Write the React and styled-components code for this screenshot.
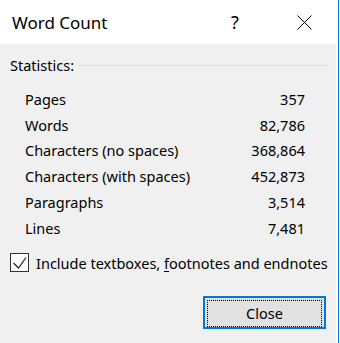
import React from 'react';
import styled, { createGlobalStyle } from 'styled-components';

const GlobalStyle = createGlobalStyle`
  html, body {
    margin: 0;
    padding: 0;
    background: #ffffff;
  }
  body {
    font-family: 'Noto Sans', 'Open Sans', sans-serif;
    color: #000000;
  }
`;

const StyledWindow = styled.div`
  width: 339px;
  height: 343px;
  display: flex;
  flex-direction: column;
  border-right: 1px solid #0078d7;
  background: #ffffff;
  box-sizing: border-box;
`;

const StyledTitleBar = styled.div`
  height: 44px;
  display: flex;
  align-items: center;
  padding-left: 12px;
  font-size: 17px;

  .title {
    flex: 1;
  }

  .help {
    width: 20px;
    margin-right: 52px;
    font-size: 18px;
    text-align: center;
  }

  .close {
    width: 15px;
    height: 15px;
    margin-right: 26px;
  }
`;

const StyledBody = styled.div`
  flex: 1;
  margin-right: 2px;
  background: #f0f0f0;
  padding: 13px 8px 0 10px;
  font-size: 14.5px;
`;

const StyledGroupHeader = styled.div`
  display: flex;
  align-items: center;
  gap: 4px;
  height: 16px;

  &:after {
    content: '';
    flex: 1;
    height: 1px;
    background: #dcdcdc;
  }
`;

const StyledStats = styled.div`
  display: grid;
  grid-template-columns: 1fr auto;
  grid-auto-rows: 25.8px;
  align-items: center;
  margin: 13px 23px 0 15px;

  .value {
    justify-self: end;
  }
`;

const StyledCheckRow = styled.label`
  display: flex;
  align-items: center;
  gap: 7px;
  height: 20px;
  margin-top: 12px;

  .box {
    width: 19px;
    height: 19px;
    box-sizing: border-box;
    border: 1px solid #333333;
    background: #ffffff;
    display: flex;
    align-items: center;
    justify-content: center;
  }

  u {
    text-underline-offset: 2px;
  }
`;

const StyledFooter = styled.div`
  display: flex;
  justify-content: flex-end;
  margin-top: 23px;
  padding-right: 2px;
`;

const StyledButton = styled.button`
  width: 123px;
  height: 33px;
  border: 2px solid #0078d7;
  background: #e1e1e1;
  padding: 2px;
  font: inherit;
  font-size: 14.5px;
  color: #000000;

  span {
    display: flex;
    align-items: center;
    justify-content: center;
    height: 100%;
    border: 1px dotted #000000;
  }
`;

const stats = [
  ['Pages', '357'],
  ['Words', '82,786'],
  ['Characters (no spaces)', '368,864'],
  ['Characters (with spaces)', '452,873'],
  ['Paragraphs', '3,514'],
  ['Lines', '7,481'],
];

const App = () => (
  <>
    <GlobalStyle />
    <StyledWindow>
      <StyledTitleBar>
        <span className="title">Word Count</span>
        <span className="help">?</span>
        <svg className="close" viewBox="0 0 15 15" fill="none" stroke="#000" strokeWidth="1">
          <path d="M0.5 0.5 L14.5 14.5 M14.5 0.5 L0.5 14.5" />
        </svg>
      </StyledTitleBar>

      <StyledBody>
        <StyledGroupHeader>Statistics:</StyledGroupHeader>

        <StyledStats>
          {stats.map(([label, value]) => (
            <React.Fragment key={label}>
              <span>{label}</span>
              <span className="value">{value}</span>
            </React.Fragment>
          ))}
        </StyledStats>

        <StyledCheckRow>
          <span className="box">
            <svg width="17" height="17" viewBox="0 0 17 17" fill="none" stroke="#222" strokeWidth="1.2">
              <path d="M2.5 9 L7.5 14 L15 3.5" />
            </svg>
          </span>
          <span>
            Include textboxes, <u>f</u>ootnotes and endnotes
          </span>
        </StyledCheckRow>

        <StyledFooter>
          <StyledButton>
            <span>Close</span>
          </StyledButton>
        </StyledFooter>
      </StyledBody>
    </StyledWindow>
  </>
);

export default App;
